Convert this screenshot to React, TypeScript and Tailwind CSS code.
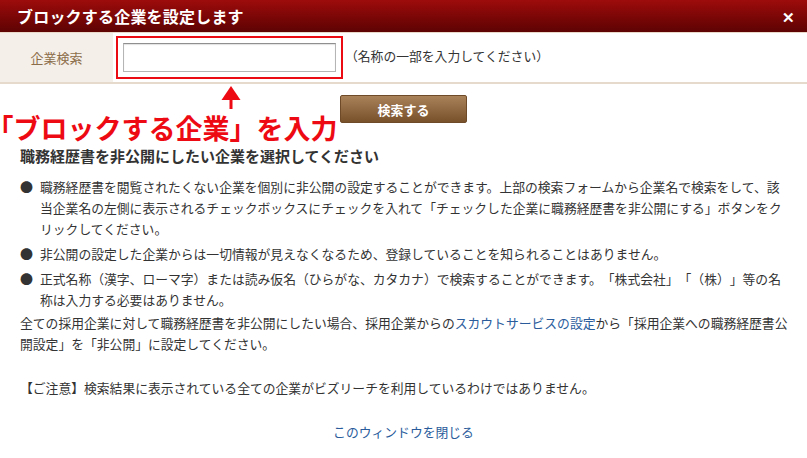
import React from "react";

const font = { fontFamily: '"Noto Sans CJK JP", "Noto Sans", sans-serif' };

export default function App() {
  return (
    <div
      className="w-[807px] h-[458px] bg-white overflow-hidden relative text-[#333333] [text-spacing-trim:space-all]"
      style={font}
    >
      {/* Header */}
      <div className="h-[33px] bg-gradient-to-b from-[#9e0c0c] to-[#5e0303] flex items-center justify-between pl-[17px] pr-[12px] border-b border-[#ead8c8]">
        <div className="text-white font-bold text-[16px] leading-none tracking-[0.2px]">
          ブロックする企業を設定します
        </div>
        <div className="text-white font-bold text-[15px] leading-none">✕</div>
      </div>

      {/* Search row */}
      <div className="h-[51px] flex items-stretch border-b-2 border-[#e5dacc]">
        <div className="w-[113px] bg-[#f4efe8] flex items-center justify-center text-[13px] text-[#8c6d4a]">
          企業検索
        </div>
        <div className="ml-[3px] mt-[3px] w-[227px] h-[43px] border-2 border-[#ea0c12] flex items-center justify-center">
          <div className="w-[213px] h-[29px] bg-white border border-[#b5b5b5] border-t-[#8f8f8f] shadow-[inset_0_1px_1px_rgba(0,0,0,0.12)]" />
        </div>
        <div className="ml-[2px] flex items-center text-[12.8px] pb-[3px]">
          （名称の一部を入力してください）
        </div>
      </div>

      {/* Button */}
      <div className="flex justify-center mt-[11px]">
        <button className="w-[127px] h-[28px] rounded-[2px] bg-gradient-to-b from-[#a9825a] to-[#78502a] border border-[#6e4a28] text-white font-bold text-[13px] leading-none">
          検索する
        </button>
      </div>

      {/* Annotation */}
      <div className="absolute left-[0px] top-[111px] text-[#ee0a13] font-bold text-[27px] leading-[34px] whitespace-nowrap [text-spacing-trim:trim-start]">
        「ブロックする企業」を入力
      </div>
      <svg
        className="absolute left-[220px] top-[86px]"
        width="22"
        height="24"
        viewBox="0 0 22 24"
      >
        <polygon points="11,0 20.5,14 1.5,14" fill="#ee0a13" />
        <rect x="9.5" y="13" width="3" height="10" fill="#ee0a13" />
      </svg>

      {/* Content */}
      <div className="px-[20px] mt-[22px]">
        <h2 className="font-bold text-[15px] leading-[22px]">
          職務経歴書を非公開にしたい企業を選択してください
        </h2>
        <ul className="mt-[9px] text-[12.8px] leading-[21px] whitespace-nowrap">
          <li className="flex">
            <span className="w-[20px] shrink-0 text-[13px]">●</span>
            <span>
              職務経歴書を閲覧されたくない企業を個別に非公開の設定することができます。上部の検索フォームから企業名で検索をして、該
              <br />
              当企業名の左側に表示されるチェックボックスにチェックを入れて「チェックした企業に職務経歴書を非公開にする」ボタンをク
              <br />
              リックしてください。
            </span>
          </li>
          <li className="flex mt-[4px]">
            <span className="w-[20px] shrink-0 text-[13px]">●</span>
            <span>
              非公開の設定した企業からは一切情報が見えなくなるため、登録していることを知られることはありません。
            </span>
          </li>
          <li className="flex mt-[4px]">
            <span className="w-[20px] shrink-0 text-[13px]">●</span>
            <span>
              正式名称（漢字、ローマ字）または読み仮名（ひらがな、カタカナ）で検索することができます。「株式会社」「（株）」等の名
              <br />
              称は入力する必要はありません。
            </span>
          </li>
        </ul>
        <p className="text-[12.8px] leading-[21px] mt-[2px] whitespace-nowrap">
          全ての採用企業に対して職務経歴書を非公開にしたい場合、採用企業からの
          <a className="text-[#2a5c9c]">スカウトサービスの設定</a>
          から「採用企業への職務経歴書公
          <br />
          開設定」を「非公開」に設定してください。
        </p>
        <p className="text-[12.8px] leading-[21px] mt-[23px] whitespace-nowrap">
          【ご注意】検索結果に表示されている全ての企業がビズリーチを利用しているわけではありません。
        </p>
        <div className="mt-[23px] flex justify-center text-[12.8px] leading-[21px]">
          <a className="text-[#2a5c9c]">このウィンドウを閉じる</a>
        </div>
      </div>
    </div>
  );
}
